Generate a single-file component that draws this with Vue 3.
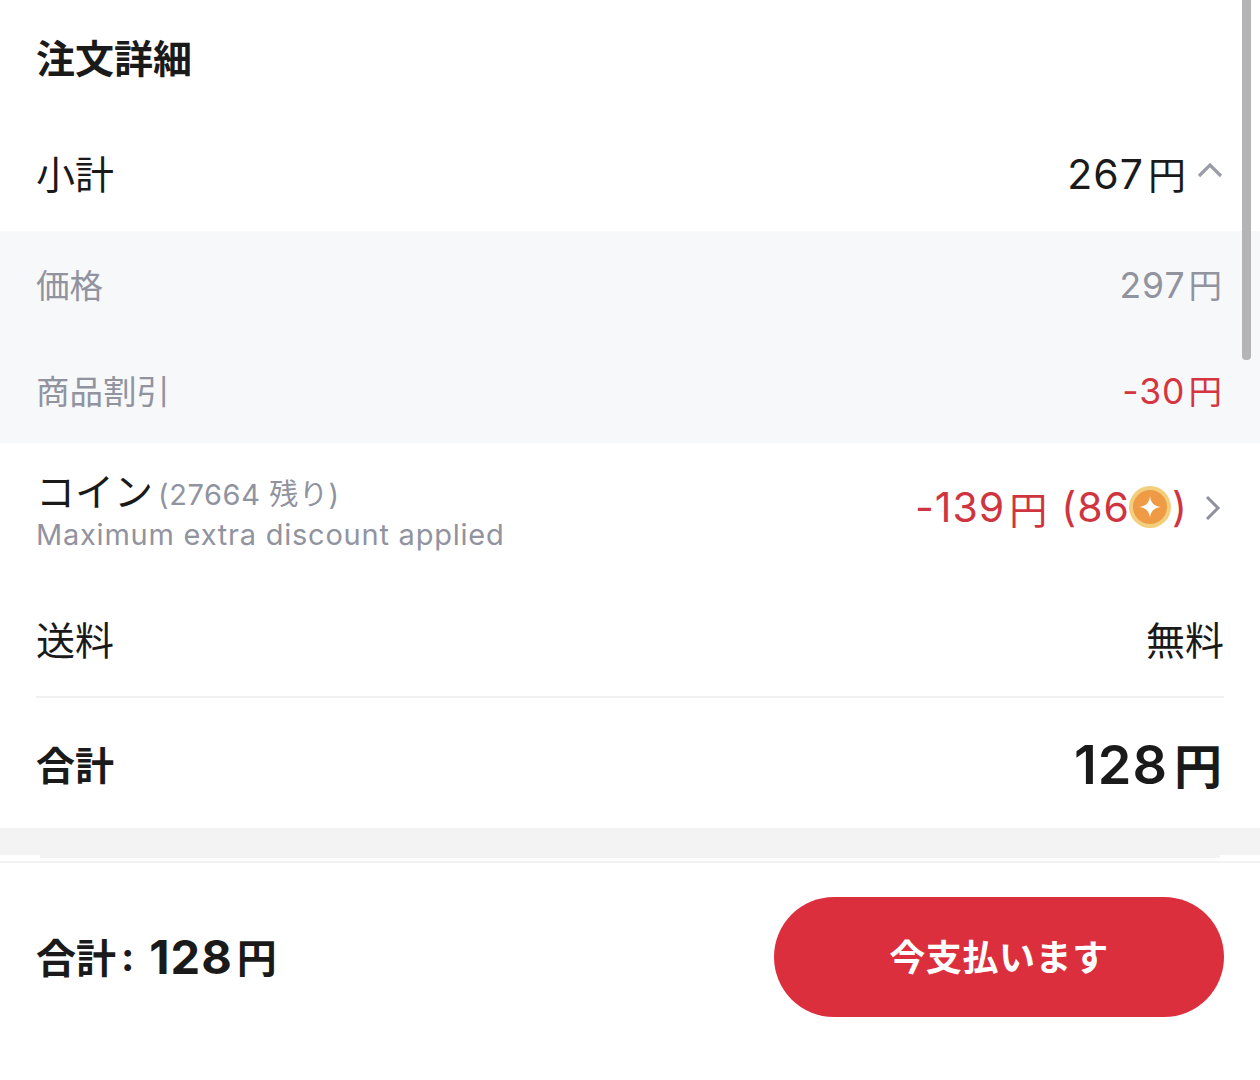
<script setup>
const sub = [
  { label: '価格', num: '297', red: false },
  { label: '商品割引', num: '-30', red: true },
]
</script>

<template>
  <div class="page">
    <main class="content">
      <h1 class="title">注文詳細</h1>
      <div class="row subtotal">
        <span class="label">小計</span>
        <span class="right tight">
          <span class="value"><span class="num">267</span>円</span>
          <svg class="chev" width="26" height="18" viewBox="0 0 26 18"><path d="M2 15 L13 4 L24 15" fill="none" stroke="#9a9ca8" stroke-width="3.2"/></svg>
        </span>
      </div>
      <section class="band">
        <div v-for="s in sub" :key="s.label" class="band-row">
          <span>{{ s.label }}</span>
          <span :class="{ red: s.red }"><span class="band-num">{{ s.num }}</span>円</span>
        </div>
      </section>
      <div class="row coin">
        <div class="coin-left">
          <div class="coin-top"><span class="label">コイン</span><span class="left-note">(27664 残り)</span></div>
          <div class="coin-sub">Maximum extra discount applied</div>
        </div>
        <span class="right">
          <span class="coin-value"><span class="num">-139</span>円<span class="num paren">(86</span><svg class="coin-icon" width="42" height="42" viewBox="0 0 42 42"><circle cx="21" cy="21" r="21" fill="#f2cf7c"/><circle cx="21" cy="21" r="17" fill="#ef9b45"/><path d="M21 10.5 C22 17 25 20 31.500 21 C25 22 22 25 21 31.500 C20 25 17 22 10.500 21 C17 20 20 17 21 10.500 Z" fill="#fff"/></svg><span class="num">)</span></span>
          <svg class="arrow" width="18" height="28" viewBox="0 0 18 28"><path d="M3 3 L14 14 L3 25" fill="none" stroke="#8f919e" stroke-width="3"/></svg>
        </span>
      </div>
      <div class="row shipping">
        <span class="label">送料</span>
        <span class="label">無料</span>
      </div>
      <div class="row total">
        <span class="total-label">合計</span>
        <span class="total-value"><span class="total-num">128</span>円</span>
      </div>
      <div class="gap"></div>
      <div class="gap-card"></div>
    </main>
    <footer class="footer">
      <div class="foot-total">合計<span class="colon">:</span><span class="foot-num">128</span>円</div>
      <button class="pay">今支払います</button>
    </footer>
    <div class="scroll"></div>
  </div>
</template>

<style scoped>
.page {
  position: relative;
  width: 1260px;
  height: 1080px;
  background: #fff;
  overflow: hidden;
  color: #1a1a1a;
  font-family: Inter, "Noto Sans CJK JP", sans-serif;
}
.content { display: flex; flex-direction: column; }
.title {
  margin: 0;
  height: 120px;
  box-sizing: border-box;
  padding: 0 36px 8px;
  display: flex;
  align-items: center;
  font-size: 39px;
  font-weight: 700;
}
.row {
  display: flex;
  justify-content: space-between;
  align-items: center;
  padding: 0 36px;
  box-sizing: border-box;
}
.label { font-size: 39px; font-weight: 400; }
.right { display: flex; align-items: center; gap: 12px; }
.right.tight { gap: 11px; }
.value { font-size: 38px; }
.num { font-size: 41px; letter-spacing: 1px; margin-right: 4px; }
.subtotal { height: 111px; padding-bottom: 7px; }
.chev { margin: -4px 1px 0 0; }
.band {
  height: 212px;
  background: #f7f8fa;
  color: #91939f;
  font-size: 33.5px;
  display: flex;
  flex-direction: column;
}
.band-row {
  flex: 1;
  display: flex;
  align-items: center;
  justify-content: space-between;
  padding: 0 38px 2px 36px;
}
.band-num { font-size: 35.500px; letter-spacing: 1px; margin-right: 3px; }
.red { color: #d5353f; }
.coin { height: 130px; padding-bottom: 0; }
.coin-left { display: flex; flex-direction: column; }
.coin-top { display: flex; align-items: center; gap: 5px; height: 48px; }
.left-note { font-size: 29px; color: #91939f; letter-spacing: 0.6px; padding-top: 6px; }
.coin-sub { font-size: 29px; color: #91939f; letter-spacing: 0.77px; line-height: 34px; margin-top: 5px; }
.coin-value { font-size: 38px; color: #cf3540; display: inline-flex; align-items: center; margin-top: -2px; }
.paren { margin-left: 14px; margin-right: 0; }
.coin-icon { margin: 0 1px 0 -1px; }
.arrow { margin-right: 2px; }
.shipping { height: 123px; padding-top: 6px; }
.total {
  height: 132px;
  margin: 0 36px;
  padding: 0 0 1px;
  border-top: 2px solid #f0f0f0;
}
.total-label { font-size: 39px; font-weight: 700; }
.total-value { font-size: 48px; font-weight: 600; padding-right: 2px; }
.total-num { font-size: 54px; letter-spacing: 1px; margin-right: 6px; }
.gap { height: 27px; background: #f3f3f3; }
.gap-card { height: 3px; margin: 0 40px; background: #f3f3f3; }
.footer {
  position: absolute;
  left: 0;
  right: 0;
  top: 861px;
  bottom: 0;
  border-top: 2px solid #f2f2f2;
  background: #fff;
  display: flex;
  justify-content: space-between;
  align-items: flex-start;
  padding: 34px 36px 0;
}
.foot-total {
  font-size: 40px;
  font-weight: 700;
  height: 120px;
  box-sizing: border-box;
  padding-bottom: 2px;
  display: flex;
  align-items: center;
  white-space: pre;
}
.colon { margin-left: 5px; }
.foot-num { font-size: 47px; letter-spacing: 1px; margin: 0 4px 0 15px; }
.pay {
  width: 450px;
  height: 120px;
  border: 0;
  border-radius: 60px;
  background: #dc2f3e;
  color: #fff;
  font-family: inherit;
  font-size: 36px;
  font-weight: 700;
  letter-spacing: 0.6px;
  padding: 0 0 4px;
}
.scroll {
  position: absolute;
  right: 9px;
  top: 0;
  width: 9px;
  height: 360px;
  background: #b4b4b6;
  border-radius: 0 0 4px 4px;
}
</style>
